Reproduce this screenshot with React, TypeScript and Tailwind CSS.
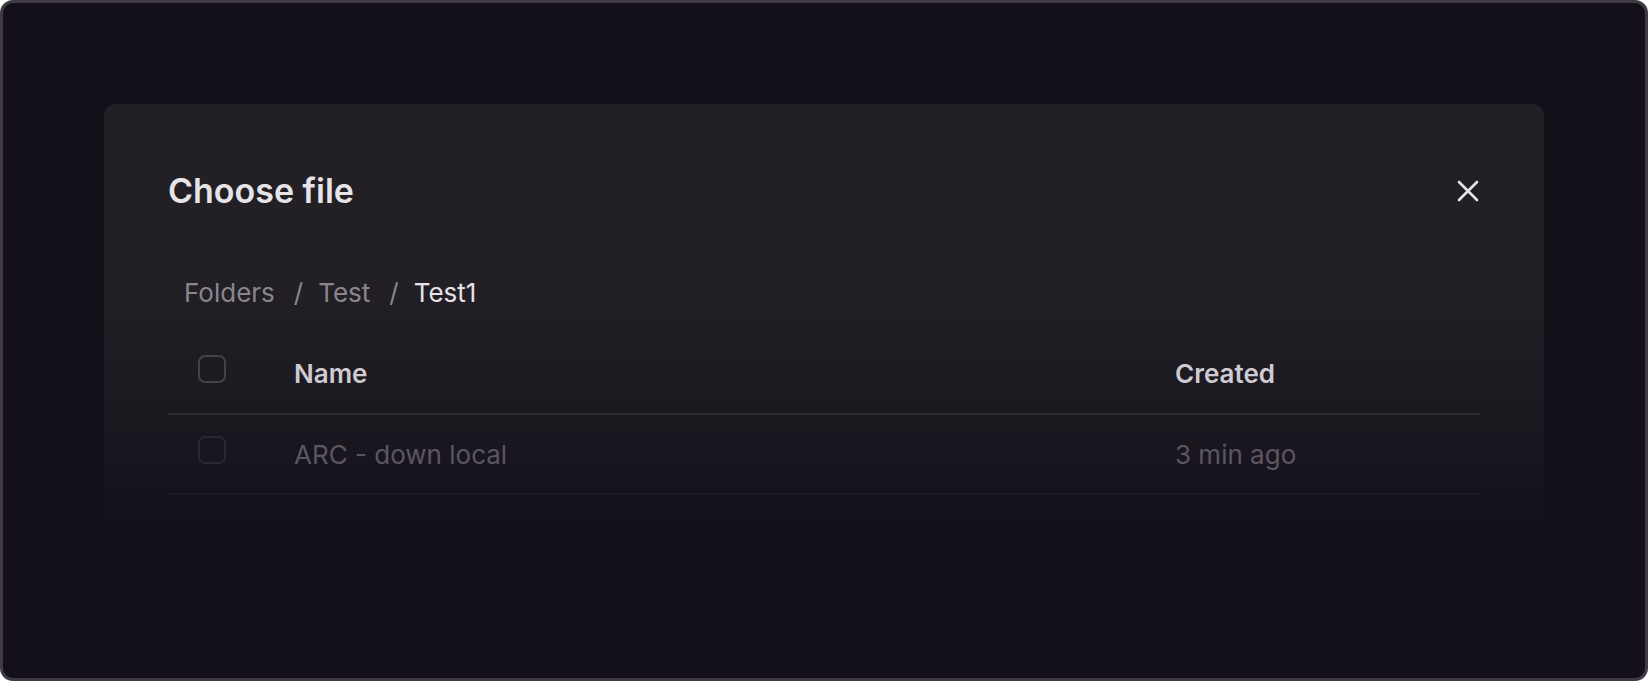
import React from 'react';

const crumbs = ['Folders', 'Test', 'Test1'];

const Checkbox: React.FC<{ dim?: boolean }> = ({ dim = false }) => (
  <span
    className={`mb-[9px] block h-[28px] w-[28px] rounded-[7px] border-2 ${
      dim ? 'border-[#2c2831]' : 'border-[#46424c]'
    }`}
  />
);

const CloseIcon = () => (
  <svg width="22" height="22" viewBox="0 0 22 22" fill="none" stroke="#e6e4e8" strokeWidth="2.6" strokeLinecap="round">
    <path d="M2 2l18 18M20 2L2 20" />
  </svg>
);

const App: React.FC = () => {
  return (
    <div className="bg-white font-['Inter','Liberation_Sans',sans-serif]">
      <div className="h-[681px] w-full overflow-hidden rounded-[13px] border-[3px] border-[#3f3a46] bg-[#14101a] px-[101px] pt-[101px]">
        <div className="h-[460px] rounded-[12px] bg-[linear-gradient(to_bottom,#221f25_40%,#1c1820_68%,#14101a_92%)] px-[64px] pt-[64px]">
          {/* header */}
          <div className="flex h-[46px] items-center justify-between">
            <h2 className="text-[34px] font-semibold leading-none text-[#e6e4e8]">Choose file</h2>
            <button className="mr-[1px] flex h-[40px] w-[40px] items-center justify-end">
              <CloseIcon />
            </button>
          </div>

          {/* breadcrumb */}
          <nav className="mt-[63px] flex h-[32px] items-center pl-[16px] text-[26px] leading-none">
            {crumbs.map((c, i) => (
              <React.Fragment key={c}>
                {i > 0 && <span className="ml-[19px] mr-[15px] text-[#8a868e]">/</span>}
                <span className={i === crumbs.length - 1 ? 'text-[#e5e3e7]' : 'text-[#8a868e]'}>{c}</span>
              </React.Fragment>
            ))}
          </nav>

          {/* table */}
          <div className="mt-[25px]">
            <div className="grid h-[81px] grid-cols-[126px_1fr_305px] items-center border-b-2 border-[#2e2a33]">
              <div className="pl-[30px]">
                <Checkbox />
              </div>
              <span className="text-[26px] font-semibold text-[#cfcbd3]">Name</span>
              <span className="text-[26px] font-semibold text-[#cfcbd3]">Created</span>
            </div>
            <div className="grid h-[80px] grid-cols-[126px_1fr_305px] items-center border-b-2 border-[#1c1920]">
              <div className="pl-[30px]">
                <Checkbox dim />
              </div>
              <span className="text-[26px] text-[#5b5760]">ARC - down local</span>
              <span className="text-[26px] text-[#5b5760]">3 min ago</span>
            </div>
          </div>
        </div>
      </div>
    </div>
  );
};

export default App;
